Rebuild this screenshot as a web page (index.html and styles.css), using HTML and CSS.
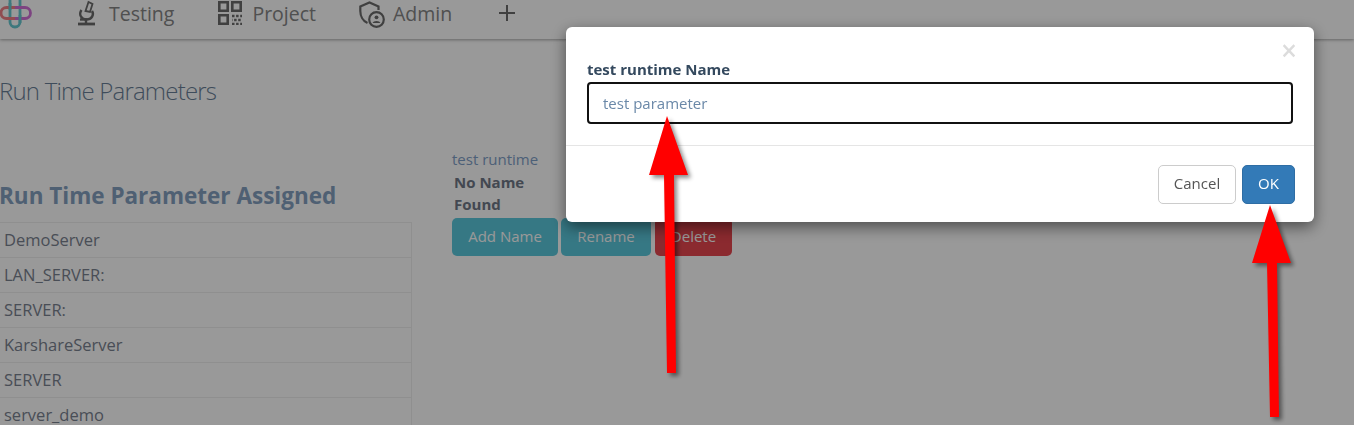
FILE: index.html
```html
<!DOCTYPE html>
<html lang="en">
<head>
    <meta charset="UTF-8">
    <meta name="viewport" content="width=device-width, initial-scale=1.0">
    <title>Run Time Parameters</title>
    <link rel="stylesheet" href="styles.css">
</head>
<body>
    <nav class="topbar">
        <svg class="logo" width="32" height="32" viewBox="0 0 32 32" fill="none" stroke-width="2.8">
            <rect x="10" y="-6" width="10" height="33" rx="5" stroke="#68c8d0"/>
            <path stroke="#f08088" d="M15 7.500H6.500A5.500 5.500 0 0 0 6.500 18.500H15"/>
            <path stroke="#d070d8" d="M15 7.500H25A5.500 5.500 0 0 1 25 18.500H15"/>
            <path stroke="#68c8d0" d="M10 3V10M20 15V23"/>
        </svg>
        <a class="nav-item nav-testing">
            <svg width="24" height="26" viewBox="0 0 24 26" fill="none" stroke="#6c6c6c" stroke-width="2.4">
                <path stroke-width="2.800" d="M3 24H20"/>
                <path d="M11 18.500V23"/>
                <path d="M6.500 10C3 15 7 19.500 11.500 19.500C16.500 19.500 19.500 15 17 11"/>
                <path stroke-width="1.800" d="M10.500 11L13.500 2L17.500 4L15 12Z"/>
                <path d="M5 19.500H12"/>
            </svg>
            <span>Testing</span>
        </a>
        <a class="nav-item nav-project">
            <svg width="24" height="24" viewBox="0 0 24 24" fill="none" stroke="#6c6c6c">
                <path stroke-width="2.600" d="M1.300 1.300H9.700V9.700H1.300ZM14.300 1.300H22.700V9.700H14.300ZM1.300 14.300H9.700V22.700H1.300Z"/>
                <path stroke-width="2.500" stroke-dasharray="2.500 1.600" d="M14 15H24"/>
                <path stroke-width="2.500" stroke-dasharray="2.500 1.600" stroke-dashoffset="2" d="M14 19H24"/>
                <path stroke-width="2.500" stroke-dasharray="2.500 1.600" d="M14 23H24"/>
            </svg>
            <span>Project</span>
        </a>
        <a class="nav-item nav-admin">
            <svg width="26" height="27" viewBox="0 0 26 27" fill="none" stroke="#6c6c6c" stroke-width="2.200">
                <path d="M8.500 22C4 20 1.300 15 1.300 10V5.500L10.500 1.500L19.500 5.500V9"/>
                <circle cx="17.500" cy="18.500" r="7.300"/>
                <circle cx="17.500" cy="16.300" r="1.900" fill="#6c6c6c" stroke="none"/>
                <path d="M13.600 22C14.300 19.200 20.700 19.200 21.400 22Z" fill="#6c6c6c" stroke="none"/>
            </svg>
            <span>Admin</span>
        </a>
        <svg class="nav-add" width="18" height="18" viewBox="0 0 18 18" stroke="#6c6c6c" stroke-width="2">
            <path d="M9 1V17M1 9H17"/>
        </svg>
    </nav>

    <main class="content">
        <h1 class="page-title">Run Time Parameters</h1>
        <div class="columns">
            <section class="assigned">
                <h2>Run Time Parameter Assigned</h2>
                <table class="param-table">
                    <tr><td>DemoServer</td></tr>
                    <tr><td>LAN_SERVER:</td></tr>
                    <tr><td>SERVER:</td></tr>
                    <tr><td>KarshareServer</td></tr>
                    <tr><td>SERVER</td></tr>
                    <tr><td>server_demo</td></tr>
                </table>
            </section>
            <section class="names">
                <div class="names-label">test runtime</div>
                <div class="names-empty">No Name Found</div>
                <div class="names-actions">
                    <button class="btn btn-info btn-add">Add Name</button>
                    <button class="btn btn-info btn-rename">Rename</button>
                    <button class="btn btn-danger btn-delete">Delete</button>
                </div>
            </section>
        </div>
    </main>

    <div class="backdrop">
        <div class="modal">
            <div class="modal-body">
                <span class="modal-close">&times;</span>
                <label class="modal-label" for="runtimeName">test runtime Name</label>
                <input class="modal-input" id="runtimeName" type="text" value="test parameter">
            </div>
            <div class="modal-footer">
                <button class="btn btn-cancel">Cancel</button>
                <button class="btn btn-ok">OK</button>
            </div>
        </div>
    </div>

    <svg class="arrows" width="1354" height="425" viewBox="0 0 1354 425">
        <path class="arrow" d="M667 116L688 175H674L676 373H667L664 175H649Z"/>
        <path class="arrow" d="M1270 205L1291 263H1277L1279 417H1270L1267 263H1252Z"/>
    </svg>
</body>
</html>
```

FILE: styles.css
```css
html, body {
    margin: 0;
    height: 425px;
    overflow: hidden;
}
body {
    font-family: "Open Sans", sans-serif;
    font-size: 16px;
    background: #fff;
    color: #7a8290;
}

.topbar {
    height: 39px;
    box-sizing: border-box;
    padding-bottom: 13px;
    display: flex;
    align-items: center;
    box-shadow: 0 1px 3px rgba(0,0,0,0.35);
}
.logo {
    flex-shrink: 0;
    align-self: flex-start;
}
.nav-item {
    display: flex;
    align-items: center;
    font-size: 19.5px;
    color: #858585;
}
.nav-item svg {
    flex-shrink: 0;
}
.nav-testing { margin-left: 43px; gap: 10px; }
.nav-project { margin-left: 44px; gap: 10px; }
.nav-admin { margin-left: 43px; gap: 8px; }
.nav-admin svg { margin-top: 3px; }
.nav-add { margin-left: 46px; }

.content {
    margin-left: -1px;
}
.page-title {
    margin: 35px 0 0;
    font-size: 24px;
    line-height: 33px;
    font-weight: 300;
    letter-spacing: -0.8px;
    color: #6a7f98;
}
.columns {
    display: flex;
    margin-top: 46px;
}
.assigned {
    width: 413px;
    flex-shrink: 0;
}
.assigned h2 {
    margin: 27px 0 10px;
    font-size: 22.5px;
    line-height: 32px;
    font-weight: 700;
    color: #84a0c0;
}
.param-table {
    width: 100%;
    border-collapse: collapse;
}
.param-table td {
    border: 1px solid #eee;
    padding: 0 4px;
    height: 34px;
    line-height: 22px;
    font-size: 16.5px;
    color: #7a8290;
}

.names {
    margin-left: 40px;
    width: 300px;
}
.names-label {
    margin-top: -4px;
    font-size: 15px;
    line-height: 20px;
    color: #7fa0c8;
}
.names-empty {
    width: 90px;
    margin: 2px 0 3px 2px;
    font-size: 15px;
    line-height: 22px;
    font-weight: 700;
    color: #707888;
}
.names-actions {
    display: flex;
    margin-top: 2px;
}

.btn {
    height: 38px;
    border: 1px solid transparent;
    border-radius: 5px;
    padding: 0 0 2px;
    font-family: inherit;
    font-size: 15px;
    color: #fff;
    cursor: pointer;
}
.btn-info { background: #5bc8dc; }
.btn-danger { background: #e8464f; }
.btn-add { width: 106px; }
.btn-rename { width: 90px; margin-left: 3px; }
.btn-delete { width: 77px; margin-left: 4px; }

.backdrop {
    position: fixed;
    inset: 0;
    background: rgba(0,0,0,0.4);
}
.modal {
    width: 748px;
    height: 195px;
    margin: 27px 0 0 566px;
    background: #fff;
    border-radius: 6px;
    box-shadow: 0 5px 15px rgba(0,0,0,0.5);
    display: flex;
    flex-direction: column;
}
.modal-body {
    position: relative;
    height: 119px;
    padding: 32px 21px 0;
    box-sizing: border-box;
    border-bottom: 1px solid #e5e5e5;
}
.modal-close {
    position: absolute;
    top: 5px;
    right: 17px;
    font-size: 28px;
    line-height: 36px;
    font-weight: 600;
    color: #dcdcdc;
}
.modal-label {
    display: block;
    font-size: 15px;
    line-height: 20px;
    font-weight: 700;
    color: #34495e;
}
.modal-input {
    display: block;
    width: 706px;
    height: 42px;
    margin-top: 3px;
    box-sizing: border-box;
    border: 2px solid #111;
    border-radius: 4px;
    padding: 0 14px;
    font-family: inherit;
    font-size: 15px;
    color: #6a88a8;
    outline: none;
}
.modal-footer {
    display: flex;
    justify-content: flex-end;
    gap: 6px;
    padding: 19px 19px 0 0;
}
.btn-cancel {
    width: 78px;
    height: 39px;
    padding-bottom: 4px;
    background: #fff;
    border-color: #ccc;
    color: #555;
}
.btn-ok {
    width: 53px;
    height: 39px;
    padding-bottom: 4px;
    background: #337ab7;
    border-color: #2e6da4;
}

.arrows {
    position: fixed;
    left: 0;
    top: 0;
    pointer-events: none;
}
.arrow {
    fill: #ff0000;
    filter: drop-shadow(3px 3px 2px rgba(0,0,0,0.45));
}
```
